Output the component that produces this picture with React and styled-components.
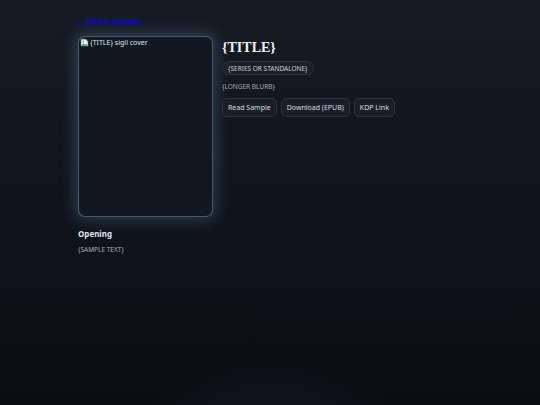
import React from 'react';
import styled, { createGlobalStyle } from 'styled-components';

const GlobalStyle = createGlobalStyle`
  html, body {
    margin: 0;
    padding: 0;
    background: #0b0e15;
  }
  body {
    font-family: "Noto Sans", "Open Sans", sans-serif;
    color: #d7dde6;
  }
`;

const Page = styled.div`
  min-height: 100vh;
  box-sizing: border-box;
  padding: 15px 78px 40px;
  background:
    radial-gradient(ellipse 190px 110px at 50% 108%, rgba(24, 32, 44, 0.55), transparent 70%),
    linear-gradient(180deg, #161a23 0%, #10141c 45%, #0a0d14 100%);
`;

const BackLink = styled.a`
  display: block;
  width: fit-content;
  font-size: 7px;
  line-height: 9px;
  color: #0000ee;
  text-decoration: underline;
`;

const Hero = styled.section`
  display: grid;
  grid-template-columns: 135px 1fr;
  gap: 9px;
  margin-top: 12px;
`;

const Cover = styled.div`
  box-sizing: border-box;
  height: 181px;
  border-radius: 7px;
  border: 1px solid rgba(150, 185, 215, 0.4);
  background: #121821;
  box-shadow: 0 0 15px 3px rgba(110, 160, 200, 0.3);
  padding: 1px;
  display: flex;
  align-items: flex-start;
  gap: 1px;
`;

const AltText = styled.span`
  font-size: 7px;
  line-height: 9px;
  color: #dfe4ea;
`;

const Details = styled.div`
  display: flex;
  flex-direction: column;
  align-items: flex-start;
  padding-top: 4px;
`;

const Title = styled.h1`
  margin: 0;
  font-family: "Liberation Serif", "DejaVu Serif", serif;
  font-size: 14px;
  line-height: 16px;
  font-weight: bold;
  color: #eef1f5;
`;

const Pill = styled.span`
  margin-top: 5px;
  box-sizing: border-box;
  height: 14px;
  padding: 0 5px;
  display: inline-flex;
  align-items: center;
  border-radius: 7px;
  border: 1px solid #2e3541;
  background: #1a1f28;
  font-size: 6.5px;
  color: #c9d0da;
`;

const Blurb = styled.p`
  margin: 7px 0 0;
  font-size: 6.5px;
  line-height: 9px;
  color: #a3abb7;
`;

const Actions = styled.div`
  display: flex;
  gap: 4px;
  margin-top: 7px;
`;

const Button = styled.button`
  box-sizing: border-box;
  height: 19px;
  padding: 0 5px;
  border-radius: 5px;
  border: 1px solid #2c333f;
  background: #191e27;
  font-family: "Noto Sans", "Open Sans", sans-serif;
  font-size: 7px;
  color: #d5dbe4;
  cursor: pointer;
`;

const Excerpt = styled.section`
  margin-top: 11px;
`;

const Heading = styled.h2`
  margin: 0;
  font-size: 8px;
  line-height: 11px;
  font-weight: bold;
  color: #dfe4ea;
`;

const Sample = styled.p`
  margin: 6px 0 0;
  font-size: 6.5px;
  line-height: 9px;
  color: #a9b1bc;
`;

const BrokenImage = () => (
  <svg width="9" height="9" viewBox="0 0 16 16">
    <path d="M2 2h8l4 4v8H2z" fill="#f3f5f7" stroke="#9aa4ad" strokeWidth="1" />
    <path d="M2 14l4-5 3 3 2-2 3 4z" fill="#4caf6a" />
    <circle cx="6" cy="6" r="1.6" fill="#5b9bd5" />
  </svg>
);

const App = () => {
  const actions = ['Read Sample', 'Download (EPUB)', 'KDP Link'];

  return (
    <>
      <GlobalStyle />
      <Page>
        <BackLink href="#">← Back to Gateway</BackLink>
        <Hero>
          <Cover>
            <BrokenImage />
            <AltText>{'{TITLE}'} sigil cover</AltText>
          </Cover>
          <Details>
            <Title>{'{TITLE}'}</Title>
            <Pill>{'{SERIES OR STANDALONE}'}</Pill>
            <Blurb>{'{LONGER BLURB}'}</Blurb>
            <Actions>
              {actions.map((label) => (
                <Button key={label}>{label}</Button>
              ))}
            </Actions>
          </Details>
        </Hero>
        <Excerpt>
          <Heading>Opening</Heading>
          <Sample>{'{SAMPLE TEXT}'}</Sample>
        </Excerpt>
      </Page>
    </>
  );
};

export default App;
